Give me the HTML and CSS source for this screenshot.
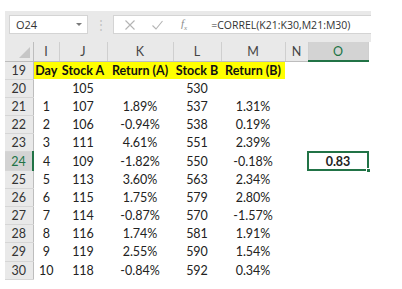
FILE: index.html
```html
<!DOCTYPE html>
<html lang="en">

<head>
    <meta charset="UTF-8">
    <meta name="viewport" content="width=device-width, initial-scale=1.0">
    <title>CORREL</title>
    <link rel="stylesheet" href="styles.css">
</head>

<body>
    <div class="excel">
        <div class="toolbar">
            <div class="namebox">
                <span>O24</span>
                <span class="caret"></span>
            </div>
            <div class="grip">⋮</div>
            <div class="formula-bar">
                <svg class="fbtn" width="12" height="12" viewBox="0 0 12 12">
                    <path d="M1.5 1.5 L10.5 10.5 M10.5 1.5 L1.5 10.5" stroke="#b4b4b4" stroke-width="1.1" fill="none" />
                </svg>
                <svg class="fbtn" width="13" height="12" viewBox="0 0 13 12">
                    <path d="M1.5 6.5 L5 10 L11.5 2" stroke="#b4b4b4" stroke-width="1.1" fill="none" />
                </svg>
                <span class="fx">f<sub>x</sub></span>
                <span class="formula-text">=CORREL(K21:K30,M21:M30)</span>
            </div>
        </div>

        <table class="sheet">
            <colgroup>
                <col class="c-rh">
                <col class="c-i">
                <col class="c-j">
                <col class="c-k">
                <col class="c-l">
                <col class="c-m">
                <col class="c-n">
                <col class="c-o">
            </colgroup>
            <thead>
                <tr>
                    <th class="corner"><span class="tri"></span></th>
                    <th>I</th>
                    <th>J</th>
                    <th>K</th>
                    <th>L</th>
                    <th>M</th>
                    <th>N</th>
                    <th class="active-col">O</th>
                </tr>
            </thead>
            <tbody>
                <tr class="head-row">
                    <th>19</th>
                    <td>Day</td><td>Stock A</td><td>Return (A)</td><td>Stock B</td><td>Return (B)</td>
                    <td class="blank"></td><td class="blank"></td>
                </tr>
                <tr>
                    <th>20</th>
                    <td></td><td>105</td><td></td><td>530</td><td></td><td></td><td></td>
                </tr>
                <tr>
                    <th>21</th>
                    <td>1</td><td>107</td><td>1.89%</td><td>537</td><td>1.31%</td><td></td><td></td>
                </tr>
                <tr>
                    <th>22</th>
                    <td>2</td><td>106</td><td>-0.94%</td><td>538</td><td>0.19%</td><td></td><td></td>
                </tr>
                <tr>
                    <th>23</th>
                    <td>3</td><td>111</td><td>4.61%</td><td>551</td><td>2.39%</td><td></td><td></td>
                </tr>
                <tr>
                    <th class="active-row">24</th>
                    <td>4</td><td>109</td><td>-1.82%</td><td>550</td><td>-0.18%</td><td></td>
                    <td class="selected"><b>0.83</b><span class="handle"></span></td>
                </tr>
                <tr>
                    <th>25</th>
                    <td>5</td><td>113</td><td>3.60%</td><td>563</td><td>2.34%</td><td></td><td></td>
                </tr>
                <tr>
                    <th>26</th>
                    <td>6</td><td>115</td><td>1.75%</td><td>579</td><td>2.80%</td><td></td><td></td>
                </tr>
                <tr>
                    <th>27</th>
                    <td>7</td><td>114</td><td>-0.87%</td><td>570</td><td>-1.57%</td><td></td><td></td>
                </tr>
                <tr>
                    <th>28</th>
                    <td>8</td><td>116</td><td>1.74%</td><td>581</td><td>1.91%</td><td></td><td></td>
                </tr>
                <tr>
                    <th>29</th>
                    <td>9</td><td>119</td><td>2.55%</td><td>590</td><td>1.54%</td><td></td><td></td>
                </tr>
                <tr>
                    <th>30</th>
                    <td>10</td><td>118</td><td>-0.84%</td><td>592</td><td>0.34%</td><td></td><td></td>
                </tr>
            </tbody>
        </table>
    </div>
</body>

</html>
```

FILE: styles.css
```css
* {
    margin: 0;
    padding: 0;
    box-sizing: border-box;
}

body {
    background: #fff;
    font-family: 'Lato', 'Liberation Sans', sans-serif;
    color: #222;
}

.excel {
    width: 366px;
    margin: 11px 0 0 5px;
}

/* name box + formula bar */

.toolbar {
    display: flex;
    align-items: flex-start;
    height: 31px;
    padding: 4px 0 0 4px;
    background: #e9e9e9;
}

.namebox {
    display: flex;
    align-items: center;
    justify-content: space-between;
    width: 79px;
    height: 19px;
    padding: 0 5px 0 6px;
    background: #fff;
    border: 1px solid #d4d4d4;
    font-family: 'Open Sans', sans-serif;
    font-size: 11px;
    color: #333;
}

.caret {
    width: 0;
    height: 0;
    border-left: 3px solid transparent;
    border-right: 3px solid transparent;
    border-top: 3px solid #7a7a7a;
}

.grip {
    width: 25px;
    text-align: center;
    color: #c2c2c2;
    font-size: 12px;
    line-height: 19px;
}

.formula-bar {
    display: flex;
    align-items: center;
    flex: 1;
    height: 19px;
    padding-left: 10px;
    background: #fff;
    border: 1px solid #d4d4d4;
    border-right: none;
}

.fbtn {
    margin-right: 15px;
}

.fx {
    font-family: 'Liberation Serif', serif;
    font-style: italic;
    font-size: 11px;
    color: #8c8c8c;
    margin: 0 24px 0 2px;
}

.fx sub {
    font-size: 7px;
}

.formula-text {
    font-family: 'Open Sans', sans-serif;
    font-size: 10.5px;
    color: #333;
}

/* grid */

.sheet {
    border-collapse: collapse;
    table-layout: fixed;
    width: 363px;
    font-size: 12.5px;
}

.c-rh { width: 28px; }
.c-i { width: 26px; }
.c-j { width: 48px; }
.c-k { width: 66px; }
.c-l { width: 48px; }
.c-m { width: 64px; }
.c-n { width: 23px; }
.c-o { width: 60px; }

thead th {
    height: 19px;
    background: #e9e9e9;
    border-right: 1px solid #cfcfcf;
    border-bottom: 1px solid #bdbdbd;
    font-weight: normal;
    font-size: 12.5px;
    color: #444;
    text-align: center;
}

thead th.corner {
    position: relative;
    border-right: 1px solid #bdbdbd;
}

.tri {
    position: absolute;
    right: 3px;
    bottom: 3px;
    width: 0;
    height: 0;
    border-left: 11px solid transparent;
    border-bottom: 11px solid #c6c6c6;
}

thead th.active-col {
    background: #d3d3d3;
    border-bottom: 2px solid #217346;
    color: #217346;
}

tbody tr {
    height: 18.2px;
}

tbody th {
    background: #e9e9e9;
    border-right: 1px solid #bdbdbd;
    border-bottom: 1px solid #d6d6d6;
    font-weight: normal;
    color: #333;
    text-align: center;
}

tbody th.active-row {
    background: #d3d3d3;
    border-right: 2px solid #217346;
    color: #217346;
}

td {
    text-align: center;
    white-space: nowrap;
    padding: 0;
}

.head-row td {
    background: #ffff00;
    font-weight: bold;
    color: #111;
}

.head-row td.blank {
    background: #fff;
}

td.selected {
    position: relative;
    border: 2px solid #217346;
}

.handle {
    position: absolute;
    right: -4px;
    bottom: -4px;
    width: 5px;
    height: 5px;
    background: #217346;
    border: 1px solid #fff;
}
```
